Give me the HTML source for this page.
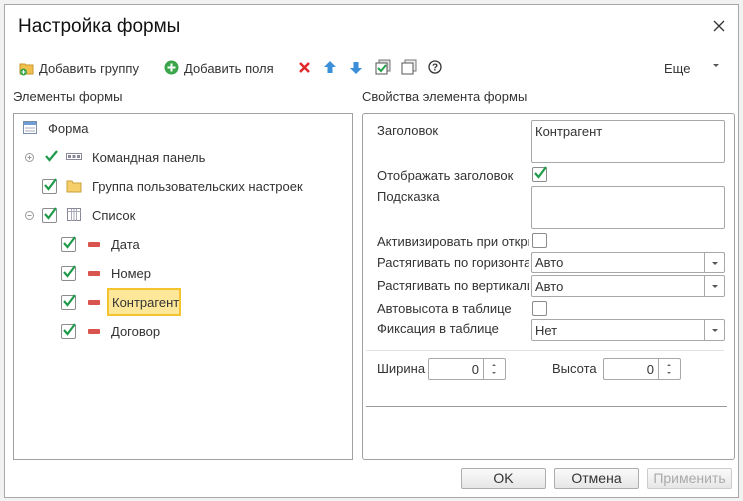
<!DOCTYPE html><html><head><meta charset="utf-8"><style>
*{box-sizing:border-box;margin:0;padding:0}
body{width:743px;height:501px;background:#f2f2f2;font-family:"Liberation Sans",sans-serif;font-size:13px;color:#333;position:relative;overflow:hidden}
.a{position:absolute}
.win{left:4px;top:4px;width:735px;height:494px;background:#fff;border:1px solid #a8a8a8}
.panel{border:1px solid #a0a0a0;background:#fff}
.cb{width:15px;height:15px;border:1px solid #8c8c8c;border-radius:2px;background:#fff}
.inp{border:1px solid #a8a8a8;border-radius:2px;background:#fff}
.t{white-space:nowrap}
.btn{border:1px solid #adadad;border-radius:2px;background:linear-gradient(#fafafa,#e6e6e6);text-align:center;line-height:19px;font-size:14px}
.dd{position:absolute;right:0;top:0;bottom:0;width:20px;border-left:1px solid #a8a8a8}
.dd:after{content:"";position:absolute;left:7px;top:9px;border:3px solid transparent;border-top:3px solid #555}
.sp{position:absolute;right:0;top:0;bottom:0;width:22px;border-left:1px solid #a8a8a8}
.sp:before{content:"";position:absolute;left:8px;top:3px;border:2px solid transparent;border-bottom:2px solid #666}
.sp:after{content:"";position:absolute;left:8px;top:13px;border:2px solid transparent;border-top:2px solid #666}
.mn{width:12px;height:5px;background:#d9534f;border-radius:1px}
</style></head><body>
<div class="a win"></div>
<div class="a t" style="left:18px;top:16px;font-size:19px;color:#111">Настройка формы</div>
<svg class="a" style="left:713px;top:20px" width="12" height="12"><path d="M1 1L11 11M11 1L1 11" stroke="#333" stroke-width="1.3"/></svg>
<svg class="a" style="left:19px;top:60px" width="16" height="16"><path d="M1 4h5l1 1h7v9H1z" fill="#f2c04e" stroke="#c8962a"/><circle cx="4.5" cy="12" r="3.5" fill="#3aa54a"/><path d="M4.5 10v4M2.5 12h4" stroke="#fff"/></svg>
<div class="a t" style="left:39px;top:61px">Добавить группу</div>
<svg class="a" style="left:164px;top:60px" width="15" height="15"><circle cx="7.5" cy="7.5" r="7" fill="#3aa54a"/><path d="M7.5 3.5v8M3.5 7.5h8" stroke="#fff" stroke-width="2"/></svg>
<div class="a t" style="left:184px;top:61px">Добавить поля</div>
<svg class="a" style="left:298px;top:61px" width="13" height="13"><path d="M2 2L11 11M11 2L2 11" stroke="#e0282a" stroke-width="2.5"/></svg>
<svg class="a" style="left:324px;top:61px" width="12" height="13"><path d="M6 0L12 6H8.5v6h-5V6H0z" fill="#3a8fd8"/></svg>
<svg class="a" style="left:350px;top:61px" width="12" height="13"><path d="M6 13L12 7H8.5V1h-5v6H0z" fill="#3a8fd8"/></svg>
<svg class="a" style="left:375px;top:59px" width="16" height="16"><rect x="4" y="1" width="11" height="11" fill="#ddd" stroke="#777"/><rect x="1" y="4" width="11" height="11" fill="#fff" stroke="#555"/><path d="M3 9l3 3 5-6" stroke="#22a04a" stroke-width="2" fill="none"/></svg>
<svg class="a" style="left:401px;top:59px" width="16" height="16"><rect x="4" y="1" width="11" height="11" fill="#eee" stroke="#777"/><rect x="1" y="4" width="11" height="11" fill="#fff" stroke="#555"/></svg>
<svg class="a" style="left:428px;top:60px" width="14" height="14"><circle cx="7" cy="7" r="6" fill="none" stroke="#333" stroke-width="1.3"/><text x="7" y="10.5" font-size="10" font-weight="bold" text-anchor="middle" fill="#333" font-family="Liberation Sans">?</text></svg>
<div class="a t" style="left:664px;top:61px">Еще</div>
<div class="a" style="left:713px;top:64px;border:3px solid transparent;border-top:3px solid #555"></div>
<div class="a t" style="left:13px;top:89px">Элементы формы</div>
<div class="a t" style="left:362px;top:89px">Свойства элемента формы</div>
<div class="a panel" style="left:13px;top:113px;width:340px;height:347px"></div>
<svg class="a" style="left:23px;top:121px" width="14" height="13"><rect x="0.5" y="0.5" width="13" height="12" fill="#fff" stroke="#7a8ea8"/><rect x="1" y="1" width="12" height="3" fill="#6f9ed6"/><path d="M2 7h10M2 10h10" stroke="#aab"/></svg>
<div class="a t" style="left:48px;top:121px">Форма</div>
<svg class="a" style="left:25px;top:153px" width="9" height="9"><circle cx="4.5" cy="4.5" r="4" fill="none" stroke="#999"/><path d="M2.5 4.5h4M4.5 2.5v4" stroke="#999"/></svg>
<svg class="a" style="left:44px;top:149px" width="15" height="13"><path d="M2 7l3.5 4L13 2" stroke="#1f9a4a" stroke-width="2.2" fill="none"/></svg>
<svg class="a" style="left:66px;top:153px" width="16" height="7"><rect x=".5" y=".5" width="15" height="6" fill="#fff" stroke="#889"/><rect x="2" y="2" width="3" height="3" fill="#889"/><rect x="6.5" y="2" width="3" height="3" fill="#889"/><rect x="11" y="2" width="3" height="3" fill="#889"/></svg>
<div class="a t" style="left:92px;top:150px">Командная панель</div>
<div class="a cb" style="left:42px;top:179px"></div>
<svg class="a" style="left:43px;top:177px" width="15" height="15"><path d="M2 8l3.5 4L13 2" stroke="#1f9a4a" stroke-width="2.2" fill="none"/></svg>
<svg class="a" style="left:66px;top:179px" width="16" height="14"><path d="M1 2h5l1 2h8v9H1z" fill="#f6cf6a" stroke="#caa03a"/></svg>
<div class="a t" style="left:92px;top:179px">Группа пользовательских настроек</div>
<svg class="a" style="left:25px;top:211px" width="9" height="9"><circle cx="4.5" cy="4.5" r="4" fill="none" stroke="#999"/><path d="M2.5 4.5h4" stroke="#999"/></svg>
<div class="a cb" style="left:42px;top:208px"></div>
<svg class="a" style="left:43px;top:206px" width="15" height="15"><path d="M2 8l3.5 4L13 2" stroke="#1f9a4a" stroke-width="2.2" fill="none"/></svg>
<svg class="a" style="left:67px;top:208px" width="14" height="13"><rect x=".5" y=".5" width="13" height="12" fill="#fff" stroke="#889"/><path d="M4.5 1v12M7 1v12M9.5 1v12M1 3.5h13" stroke="#aab"/></svg>
<div class="a t" style="left:92px;top:208px">Список</div>
<div class="a cb" style="left:61px;top:237px"></div><svg class="a" style="left:62px;top:235px" width="15" height="15"><path d="M2 8l3.5 4L13 2" stroke="#1f9a4a" stroke-width="2.2" fill="none"/></svg><div class="a mn" style="left:88px;top:242px"></div><div class="a t" style="left:111px;top:237px">Дата</div>
<div class="a cb" style="left:61px;top:266px"></div><svg class="a" style="left:62px;top:264px" width="15" height="15"><path d="M2 8l3.5 4L13 2" stroke="#1f9a4a" stroke-width="2.2" fill="none"/></svg><div class="a mn" style="left:88px;top:271px"></div><div class="a t" style="left:111px;top:266px">Номер</div>
<div class="a cb" style="left:61px;top:295px"></div><svg class="a" style="left:62px;top:293px" width="15" height="15"><path d="M2 8l3.5 4L13 2" stroke="#1f9a4a" stroke-width="2.2" fill="none"/></svg><div class="a mn" style="left:88px;top:300px"></div>
<div class="a t" style="left:107px;top:288px;width:74px;height:28px;background:#fde89a;border:2px solid #f3c330;padding:5px 0 0 3px">Контрагент</div>
<div class="a cb" style="left:61px;top:324px"></div><svg class="a" style="left:62px;top:322px" width="15" height="15"><path d="M2 8l3.5 4L13 2" stroke="#1f9a4a" stroke-width="2.2" fill="none"/></svg><div class="a mn" style="left:88px;top:329px"></div><div class="a t" style="left:111px;top:324px">Договор</div>
<div class="a panel" style="left:362px;top:113px;width:373px;height:347px;border-radius:3px"></div>
<div class="a t" style="left:377px;top:123px">Заголовок</div>
<div class="a inp" style="left:531px;top:120px;width:194px;height:43px;padding:3px 3px">Контрагент</div>
<div class="a t" style="left:377px;top:168px">Отображать заголовок</div>
<div class="a cb" style="left:532px;top:167px"></div>
<svg class="a" style="left:533px;top:165px" width="15" height="15"><path d="M2 8l3.5 4L13 2" stroke="#1f9a4a" stroke-width="2.2" fill="none"/></svg>
<div class="a t" style="left:377px;top:189px">Подсказка</div>
<div class="a inp" style="left:531px;top:186px;width:194px;height:43px"></div>
<div class="a t" style="left:377px;top:234px;width:152px;overflow:hidden">Активизировать при открытии</div>
<div class="a cb" style="left:532px;top:233px"></div>
<div class="a t" style="left:377px;top:255px;width:152px;overflow:hidden">Растягивать по горизонтали</div>
<div class="a inp" style="left:531px;top:252px;width:194px;height:21px;padding:2px 3px">Авто<div class="dd"></div></div>
<div class="a t" style="left:377px;top:278px;width:152px;overflow:hidden">Растягивать по вертикали</div>
<div class="a inp" style="left:531px;top:275px;width:194px;height:22px;padding:3px 3px">Авто<div class="dd"></div></div>
<div class="a t" style="left:377px;top:301px">Автовысота в таблице</div>
<div class="a cb" style="left:532px;top:301px"></div>
<div class="a t" style="left:377px;top:321px">Фиксация в таблице</div>
<div class="a inp" style="left:531px;top:319px;width:194px;height:22px;padding:3px 3px">Нет<div class="dd"></div></div>
<div class="a" style="left:366px;top:350px;width:358px;height:1px;background:#e2e2e2"></div>
<div class="a t" style="left:377px;top:361px">Ширина</div>
<div class="a inp" style="left:428px;top:358px;width:78px;height:22px;text-align:right;padding:3px 26px 0 0">0<div class="sp"></div></div>
<div class="a t" style="left:552px;top:361px">Высота</div>
<div class="a inp" style="left:603px;top:358px;width:78px;height:22px;text-align:right;padding:3px 26px 0 0">0<div class="sp"></div></div>
<div class="a" style="left:366px;top:406px;width:361px;height:1px;background:#999"></div>
<div class="a btn" style="left:461px;top:468px;width:85px;height:21px">OK</div>
<div class="a btn" style="left:554px;top:468px;width:85px;height:21px">Отмена</div>
<div class="a btn" style="left:647px;top:468px;width:85px;height:21px;color:#aaa;border-color:#ccc">Применить</div>
</body></html>
